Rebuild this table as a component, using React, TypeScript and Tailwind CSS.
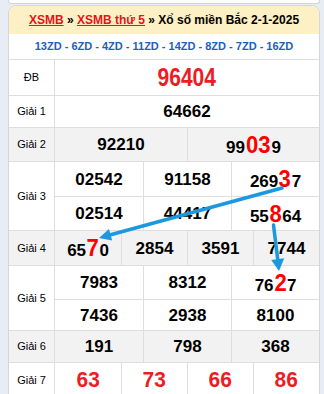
import React from "react";

type Seg = string | { r: string };
type Num = Seg[];

const RED = "text-[#ff0000]";

function NumText({ n, kind }: { n: Num; kind: "normal" | "db" | "g7" }) {
  if (kind === "db") {
    return (
      <span className="inline-block origin-center scale-x-[0.84] text-[25px] font-bold leading-none text-[#ee1c25]">
        {n.map((s) => (typeof s === "string" ? s : s.r)).join("")}
      </span>
    );
  }
  if (kind === "g7") {
    return (
      <span className="inline-block origin-center scale-x-[0.95] text-[22px] font-bold leading-none text-[#ee1c25]">
        {n.map((s) => (typeof s === "string" ? s : s.r)).join("")}
      </span>
    );
  }
  return (
    <span className="flex items-baseline text-[17px] font-bold leading-none text-black">
      {n.map((s, i) =>
        typeof s === "string" ? (
          <span key={i}>{s}</span>
        ) : (
          <span key={i} className={`inline-block scale-x-[0.92] text-[24px] leading-none ${RED}`}>
            {s.r}
          </span>
        )
      )}
    </span>
  );
}

function Cells({
  nums,
  cols,
  h,
  kind = "normal",
  last = false,
}: {
  nums: Num[];
  cols: 1 | 2 | 3 | 4;
  h: string;
  kind?: "normal" | "db" | "g7";
  last?: boolean;
}) {
  const grid =
    cols === 1 ? "grid-cols-1" : cols === 2 ? "grid-cols-2" : cols === 3 ? "grid-cols-3" : "grid-cols-4";
  return (
    <div className={`grid ${grid} ${h} ${last ? "" : "border-b border-[#dedede]"}`}>
      {nums.map((n, i) => (
        <div
          key={i}
          className={`flex items-center justify-center ${i > 0 ? "border-l border-[#dedede]" : ""}`}
        >
          <NumText n={n} kind={kind} />
        </div>
      ))}
    </div>
  );
}

function Row({
  label,
  gray,
  children,
  last = false,
}: {
  label: string;
  gray?: boolean;
  children: React.ReactNode;
  last?: boolean;
}) {
  return (
    <div className={`flex ${gray ? "bg-[#f2f2f2]" : "bg-white"} ${last ? "" : "border-b border-[#dedede]"}`}>
      <div className="flex w-[46px] shrink-0 items-center justify-center border-r border-[#dedede] text-[11px] text-black">
        {label}
      </div>
      <div className="flex flex-1 flex-col">{children}</div>
    </div>
  );
}

export default function App() {
  return (
    <div className="relative h-[394px] w-[324px] overflow-hidden bg-[#e8edf5] font-['Liberation_Sans',Arial,sans-serif]">
      <div className="ml-[8px] mr-[4px]">
        <div className="h-[4px] rounded-b-[3px] border-x border-b border-[#d6d6d6] bg-white" />
        <div className="mt-px overflow-hidden rounded-t-[8px] border border-[#d6d6d6] bg-white">
          <div className="flex h-[28px] items-center justify-center bg-[#fdf0c4] text-[12px] font-bold text-black">
            <span className="text-[#e3141b] underline">XSMB</span>
            <span className="whitespace-pre"> » </span>
            <span className="text-[#e3141b] underline">XSMB thứ 5</span>
            <span className="whitespace-pre"> » Xổ số miền Bắc 2-1-2025</span>
          </div>
          <div className="flex h-[26px] items-center justify-center border-b border-[#dedede] text-[11px] font-bold text-[#1a62b8]">
            13ZD - 6ZD - 4ZD - 11ZD - 14ZD - 8ZD - 7ZD - 16ZD
          </div>

          <Row label="ĐB">
            <Cells nums={[["96404"]]} cols={1} h="h-[35px]" kind="db" last />
          </Row>
          <Row label="Giải 1">
            <Cells nums={[["64662"]]} cols={1} h="h-[31px]" last />
          </Row>
          <Row label="Giải 2" gray>
            <Cells nums={[["92210"], ["99", { r: "03" }, "9"]]} cols={2} h="h-[33px]" last />
          </Row>
          <Row label="Giải 3">
            <Cells nums={[["02542"], ["91158"], ["269", { r: "3" }, "7"]]} cols={3} h="h-[35px]" />
            <Cells nums={[["02514"], ["44417"], ["55", { r: "8" }, "64"]]} cols={3} h="h-[33px]" last />
          </Row>
          <Row label="Giải 4" gray>
            <Cells nums={[["65", { r: "7" }, "0"], ["2854"], ["3591"], ["7744"]]} cols={4} h="h-[34px]" last />
          </Row>
          <Row label="Giải 5">
            <Cells nums={[["7983"], ["8312"], ["76", { r: "2" }, "7"]]} cols={3} h="h-[34px]" />
            <Cells nums={[["7436"], ["2938"], ["8100"]]} cols={3} h="h-[30px]" last />
          </Row>
          <Row label="Giải 6" gray>
            <Cells nums={[["191"], ["798"], ["368"]]} cols={3} h="h-[31px]" last />
          </Row>
          <Row label="Giải 7" last>
            <Cells nums={[["63"], ["73"], ["66"], ["86"]]} cols={4} h="h-[34px]" kind="g7" last />
          </Row>
        </div>
      </div>

      <svg
        className="pointer-events-none absolute left-0 top-0"
        width="324"
        height="394"
        viewBox="0 0 324 394"
      >
        <line x1="282" y1="188" x2="110.6" y2="234.8" stroke="#1b98df" strokeWidth="3.5" strokeLinecap="round" />
        <polygon points="99,238 112.2,240.6 109,229" fill="#1b98df" />
        <line x1="273.5" y1="225" x2="277.7" y2="259.1" stroke="#1b98df" strokeWidth="3.5" strokeLinecap="round" />
        <polygon points="279,271 284.2,258.3 271.2,259.9" fill="#1b98df" />
      </svg>
    </div>
  );
}
